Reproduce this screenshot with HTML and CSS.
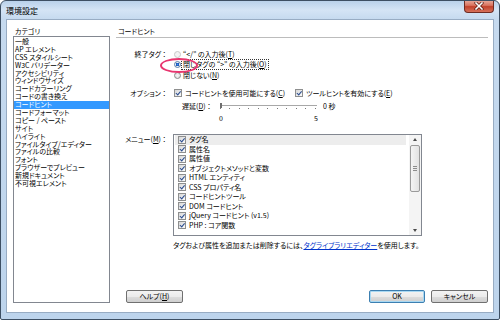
FILE: index.html
```html
<!DOCTYPE html>
<html>
<head>
    <title>環境設定</title>
    <link rel="stylesheet" href="styles.css">
</head>
<body>
    <div class="window">
        <div class="titlebar">
            <span class="title">環境設定</span>
            <div class="close-button">
                <svg width="10" height="8" viewBox="0 0 10 8">
                    <path d="M2 1 L8 7 M8 1 L2 7" stroke="#5a1a12" stroke-width="3" stroke-linecap="square"/>
                    <path d="M2 1 L8 7 M8 1 L2 7" stroke="#ffffff" stroke-width="1.6" stroke-linecap="square"/>
                </svg>
            </div>
        </div>

        <div class="client">
            <!-- Category list -->
            <div class="category-pane">
                <div class="pane-label">カテゴリ</div>
                <ul class="category-list">
                    <li>一般</li>
                    <li>AP エレメント</li>
                    <li>CSS スタイルシート</li>
                    <li>W3C バリデーター</li>
                    <li>アクセシビリティ</li>
                    <li>ウィンドウサイズ</li>
                    <li>コードカラーリング</li>
                    <li>コードの書き換え</li>
                    <li class="selected">コードヒント</li>
                    <li>コードフォーマット</li>
                    <li>コピー / ペースト</li>
                    <li>サイト</li>
                    <li>ハイライト</li>
                    <li>ファイルタイプ/エディター</li>
                    <li>ファイルの比較</li>
                    <li>フォント</li>
                    <li>ブラウザーでプレビュー</li>
                    <li>新規ドキュメント</li>
                    <li>不可視エレメント</li>
                </ul>
            </div>

            <!-- Settings for the selected category -->
            <div class="settings-pane">
                <div class="pane-heading">コードヒント</div>

                <div class="field-row close-tag-row">
                    <div class="field-label">終了タグ ：</div>
                    <div class="radio-group">
                        <div class="radio-option"><span class="radio disabled"></span>“&lt;/” の入力後(<u>T</u>)</div>
                        <div class="radio-option"><span class="radio checked"></span><span class="focus-text">閉じタグの “&gt;” の入力後(<u>O</u>)</span></div>
                        <div class="radio-option"><span class="radio"></span>閉じない(<u>N</u>)</div>
                    </div>
                    <div class="annotation"></div>
                </div>

                <div class="field-row option-row">
                    <div class="field-label">オプション ：</div>
                    <div class="check-option"><span class="checkbox checked"></span>コードヒントを使用可能にする(<u>C</u>)</div>
                    <div class="check-option"><span class="checkbox checked"></span>ツールヒントを有効にする(<u>E</u>)</div>
                </div>

                <div class="delay-row">
                    <span class="delay-label">遅延(<u>D</u>) ：</span>
                    <div class="slider"><span class="slider-thumb"></span></div>
                    <span class="slider-value">0 秒</span>
                </div>

                <div class="scale-labels">
                    <span>0</span>
                    <span>5</span>
                </div>

                <div class="field-row menu-row">
                    <div class="field-label">メニュー(<u>M</u>) ：</div>
                    <div class="menu-list">
                        <div class="menu-items">
                            <div class="menu-item current"><span class="checkbox checked"></span>タグ名</div>
                            <div class="menu-item"><span class="checkbox checked"></span>属性名</div>
                            <div class="menu-item"><span class="checkbox checked"></span>属性値</div>
                            <div class="menu-item"><span class="checkbox checked"></span>オブジェクトメソッドと変数</div>
                            <div class="menu-item"><span class="checkbox checked"></span>HTML エンティティ</div>
                            <div class="menu-item"><span class="checkbox checked"></span>CSS プロパティ名</div>
                            <div class="menu-item"><span class="checkbox checked"></span>コードヒントツール</div>
                            <div class="menu-item"><span class="checkbox checked"></span>DOM コードヒント</div>
                            <div class="menu-item"><span class="checkbox checked"></span>jQuery コードヒント (v1.5)</div>
                            <div class="menu-item"><span class="checkbox checked"></span>PHP : コア関数</div>
                        </div>
                        <div class="menu-scrollbar">
                            <div class="scroll-arrow"><span class="arrow-up"></span></div>
                            <div class="scroll-thumb"><span class="thumb-grip"></span></div>
                            <div class="scroll-track"></div>
                            <div class="scroll-arrow"><span class="arrow-down"></span></div>
                        </div>
                    </div>
                </div>

                <div class="note">タグおよび属性を追加または削除するには、<a href="#" class="note-link">タグライブラリエディター</a>を使用します。</div>

                <div class="button-row">
                    <button class="dialog-button help-button">ヘルプ(<u>H</u>)</button>
                    <button class="dialog-button default-button">OK</button>
                    <button class="dialog-button">キャンセル</button>
                </div>
            </div>
        </div>
    </div>
</body>
</html>
```

FILE: styles.css
```css
body {
    margin: 0;
    background-color: #ffffff;
    font-family: "Noto Sans CJK JP", "Noto Sans", sans-serif;
    font-size: 7px;
    font-feature-settings: "palt";
    color: #000000;
}

u {
    text-decoration: underline;
}

.window {
    width: 500px;
    height: 320px;
    box-sizing: border-box;
    border: 1px solid #3d4f63;
    border-radius: 6px 6px 2px 2px;
    background: linear-gradient(to bottom, #b9d1ea 0px, #d4e4f5 9px, #c6daef 18px, #bdd4ec 100%);
    display: flex;
    flex-direction: column;
    overflow: hidden;
}

.titlebar {
    height: 18px;
    flex-shrink: 0;
    display: flex;
    justify-content: space-between;
    align-items: flex-start;
}

.title {
    padding-left: 5px;
    font-size: 8px;
    line-height: 20px;
    font-feature-settings: normal;
}

.close-button {
    width: 30px;
    height: 13px;
    margin-top: -1px;
    margin-right: 5px;
    box-sizing: border-box;
    border: 1px solid #6e2b22;
    border-top: none;
    border-radius: 0 0 4px 4px;
    background: linear-gradient(to bottom, #eab0a2 0%, #d9735f 45%, #c2412b 55%, #d6715a 100%);
    display: flex;
    align-items: center;
    justify-content: center;
}

.client {
    flex: 1;
    margin: 0 5px 6px 5px;
    border: 1px solid #98acc3;
    background-color: #ffffff;
    padding: 6px 5px 9px 6px;
    display: flex;
    gap: 6px;
}

/* left side */

.category-pane {
    width: 97px;
    display: flex;
    flex-direction: column;
}

.pane-label {
    height: 10px;
    line-height: 10px;
    padding-left: 2px;
}

.category-list {
    flex: 1;
    margin: 0;
    padding: 1px 0 0 0;
    list-style: none;
    border: 1px solid #828790;
    overflow: hidden;
}

.category-list li {
    height: 7.9px;
    line-height: 7.9px;
    padding-left: 1px;
    white-space: nowrap;
}

.category-list li.selected {
    background-color: #3399ff;
    color: #ffffff;
}

/* right side */

.settings-pane {
    flex: 1;
    display: flex;
    flex-direction: column;
}

.pane-heading {
    height: 11px;
    line-height: 11px;
    padding-left: 2px;
    border-bottom: 1px solid #bcbcbc;
}

.field-row {
    display: flex;
    align-items: flex-start;
}

.field-label {
    width: 50px;
    margin-right: 7px;
    flex-shrink: 0;
    text-align: right;
    white-space: nowrap;
}

.close-tag-row {
    position: relative;
    margin-top: 11px;
}

.close-tag-row .field-label {
    line-height: 10.5px;
}

.radio-group {
    display: flex;
    flex-direction: column;
}

.radio-option {
    height: 10.5px;
    line-height: 10.5px;
    display: flex;
    align-items: center;
    white-space: nowrap;
}

.radio {
    width: 7px;
    height: 7px;
    margin: 0 2px 0 1px;
    flex-shrink: 0;
    box-sizing: border-box;
    border: 1px solid #8a8a8a;
    border-radius: 50%;
    background: radial-gradient(circle, #f6f6f6 0, #d9d9d9 100%);
}

.radio.checked {
    border-color: #5b7fa8;
    background: radial-gradient(circle, #3d8ef0 0, #1755b8 1.4px, #e8eef5 2px, #d2d8df 100%);
}

.radio.disabled {
    border-color: #c8c8c8;
    background: #f3f3f3;
}

.focus-text {
    outline: 1px dotted #333333;
    line-height: 9px;
    padding: 0 1px;
    margin-left: -1px;
}

.annotation {
    position: absolute;
    left: 44px;
    top: 9px;
    width: 38px;
    height: 15px;
    box-sizing: border-box;
    border: 2px solid #e8366f;
    border-radius: 50%;
}

.option-row {
    margin-top: 7.5px;
    height: 10px;
    line-height: 10px;
}

.check-option {
    display: flex;
    align-items: center;
    height: 10px;
    margin-left: 1px;
    margin-right: 9px;
    white-space: nowrap;
}

.checkbox {
    width: 8px;
    height: 8px;
    margin-right: 3px;
    flex-shrink: 0;
    box-sizing: border-box;
    border: 1px solid #8e8f8f;
    background: linear-gradient(135deg, #d6d6d6, #fbfbfb);
    position: relative;
}

.checkbox.checked::after {
    content: "";
    position: absolute;
    left: 2px;
    top: 0px;
    width: 1.5px;
    height: 3.5px;
    border: solid #274a8e;
    border-width: 0 1.5px 1.5px 0;
    transform: rotate(40deg);
}

.delay-row {
    margin-top: 3px;
    padding-left: 66px;
    height: 10px;
    line-height: 10px;
    display: flex;
    align-items: center;
    white-space: nowrap;
}

.delay-label {
    width: 36px;
    flex-shrink: 0;
}

.slider {
    width: 97px;
    height: 10px;
    margin-left: 2px;
    background:
        repeating-linear-gradient(to right, #7a7a7a 0, #7a7a7a 1px, transparent 1px, transparent 9.5px) 0 7px / 97px 1px no-repeat,
        linear-gradient(#a8a8a8, #a8a8a8) 0 4px / 97px 1px no-repeat;
}

.slider-thumb {
    display: block;
    width: 2px;
    height: 5px;
    margin-top: 2px;
    background-color: #6f6f6f;
}

.slider-value {
    margin-left: 6px;
}

.scale-labels {
    margin-top: 2px;
    margin-left: 103px;
    width: 99px;
    height: 10px;
    line-height: 10px;
    display: flex;
    justify-content: space-between;
}

.menu-row {
    margin-top: 11px;
}

.menu-row .field-label {
    line-height: 10px;
}

.menu-list {
    width: 249px;
    height: 102px;
    box-sizing: border-box;
    border: 1px solid #828790;
    display: flex;
    overflow: hidden;
}

.menu-items {
    flex: 1;
    padding: 0 3px 0 1px;
    overflow: hidden;
}

.menu-item {
    height: 9.5px;
    line-height: 9.5px;
    padding-left: 3px;
    display: flex;
    align-items: center;
    white-space: nowrap;
}

.menu-item.current {
    background-color: #ededed;
}

.menu-scrollbar {
    width: 12px;
    flex-shrink: 0;
    background-color: #f4f4f4;
    display: flex;
    flex-direction: column;
    align-items: center;
}

.scroll-arrow {
    height: 9px;
    display: flex;
    align-items: center;
    justify-content: center;
}

.arrow-up {
    width: 0;
    height: 0;
    border-left: 2.5px solid transparent;
    border-right: 2.5px solid transparent;
    border-bottom: 3px solid #4a4a4a;
}

.arrow-down {
    width: 0;
    height: 0;
    border-left: 2.5px solid transparent;
    border-right: 2.5px solid transparent;
    border-top: 3px solid #4a4a4a;
}

.scroll-thumb {
    width: 10px;
    height: 47px;
    margin-top: 1px;
    box-sizing: border-box;
    border: 1px solid #9a9a9a;
    border-radius: 2px;
    background: linear-gradient(to right, #f4f4f4, #e2e2e2);
    display: flex;
    align-items: center;
    justify-content: center;
}

.thumb-grip {
    width: 4px;
    height: 5px;
    background: repeating-linear-gradient(to bottom, #8c8c8c 0, #8c8c8c 1px, transparent 1px, transparent 2px);
}

.scroll-track {
    flex: 1;
}

.note {
    margin-top: 4px;
    margin-left: 57px;
    height: 10px;
    line-height: 10px;
    white-space: nowrap;
}

.note-link {
    color: #0033cc;
    text-decoration: underline;
}

.button-row {
    margin-top: auto;
    display: flex;
    gap: 6px;
}

.dialog-button {
    width: 57px;
    height: 13px;
    padding: 0;
    box-sizing: border-box;
    border: 1px solid #707070;
    border-radius: 2px;
    background: linear-gradient(to bottom, #f3f3f3 0%, #ebebeb 50%, #dddddd 51%, #cfcfcf 100%);
    font: inherit;
    font-feature-settings: "palt";
    line-height: 11px;
    color: #000000;
    text-align: center;
}

.help-button {
    margin-left: 10px;
    margin-right: auto;
}

.default-button {
    width: 56px;
    border-color: #3c7fb1;
    box-shadow: inset 0 0 0 1px #a8d8f2;
}
```
